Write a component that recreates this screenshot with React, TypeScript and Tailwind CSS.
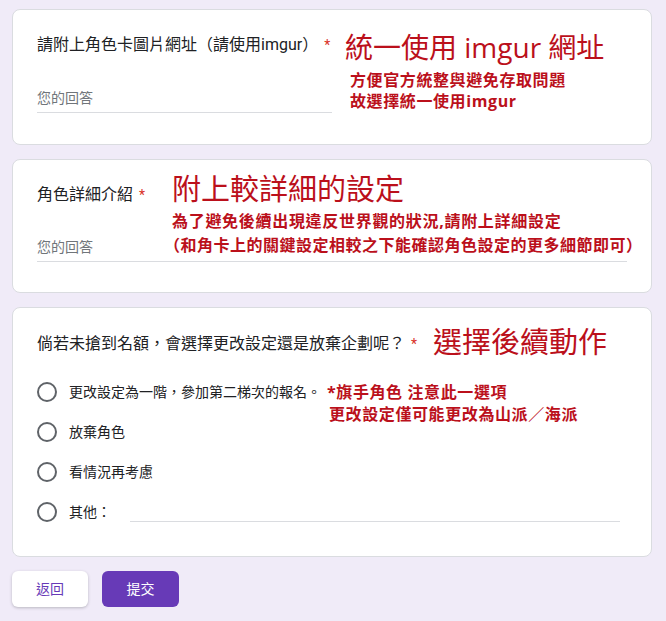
import React from 'react';

const formFont = { fontFamily: 'Roboto, "Noto Sans CJK TC", sans-serif' };
const noteFont = { fontFamily: '"Open Sans", "Noto Sans CJK TC", sans-serif' };

const Required = () => <span className="ml-[6px] text-[14px] text-[#d93025]">*</span>;

const Radio = () => (
  <span className="block h-5 w-5 shrink-0 rounded-full border-2 border-[#5f6368]" />
);

const Card: React.FC<{ className?: string; children: React.ReactNode }> = ({ className = '', children }) => (
  <div className={`w-[640px] rounded-lg border border-[#dadce0] bg-white pl-6 pr-6 ${className}`}>{children}</div>
);

export default function App() {
  return (
    <div className="min-h-screen bg-[#f0ebf8] pl-3 pt-[9px] pb-4 text-[#202124]" style={formFont}>
      <div className="flex flex-col gap-[14px]">
        {/* card 1 */}
        <Card className="flex items-start pt-[20px] pb-[31px]">
          <div className="mt-[3px] w-[295px] shrink-0">
            <div className="flex items-center text-[16px] leading-6">
              請附上角色卡圖片網址（請使用imgur）<Required />
            </div>
            <div className="mt-[29px] border-b border-[#dadce0] pb-[2px] text-[14px] leading-6 text-[#70757a]">您的回答</div>
          </div>
          <div className="ml-[13px] text-[#bb101b]" style={noteFont}>
            <div className="text-[28px] leading-[34px] whitespace-nowrap">統一使用 imgur 網址</div>
            <div className="ml-[5px] mt-[6px] text-[16px] font-bold leading-[21px] tracking-[0.6px]">
              <div>方便官方統整與避免存取問題</div>
              <div>故選擇統一使用imgur</div>
            </div>
          </div>
        </Card>

        {/* card 2 */}
        <Card className="pt-[12px] pb-[30px]">
          <div className="flex items-start">
            <div className="mt-[11px] w-[135px] shrink-0">
              <div className="flex items-center text-[16px] leading-6">
                角色詳細介紹<Required />
              </div>
              <div className="mt-[28px] text-[14px] leading-6 text-[#70757a]">您的回答</div>
            </div>
            <div className="text-[#bb101b]" style={noteFont}>
              <div className="text-[29px] leading-[34px]">附上較詳細的設定</div>
              <div className="text-[16px] font-bold leading-6 tracking-[0.7px] whitespace-nowrap">
                <div className="mt-[3px]">為了避免後續出現違反世界觀的狀況,請附上詳細設定</div>
                <div className="-ml-[8px] tracking-[0.5px]">（和角卡上的關鍵設定相較之下能確認角色設定的更多細節即可）</div>
              </div>
            </div>
          </div>
          <div className="mt-[2px] border-t border-[#dadce0]" />
        </Card>

        {/* card 3 */}
        <Card className="pt-[17px] pb-6">
          <div className="flex items-start">
            <div className="mt-[7px] flex items-center text-[16px] leading-6">
              倘若未搶到名額，會選擇更改設定還是放棄企劃呢？<Required />
            </div>
            <div className="ml-[16px] text-[29px] leading-[34px] text-[#bb101b]" style={noteFont}>
              選擇後續動作
            </div>
          </div>
          <div className="mt-[13px] flex flex-col text-[14px]">
            <div className="flex h-10 items-center">
              <Radio />
              <span className="ml-[12px]">更改設定為一階，參加第二梯次的報名。</span>
              <div className="ml-[6px] h-6 text-[16px] font-bold leading-6 tracking-[0.6px] text-[#bb101b] whitespace-nowrap" style={noteFont}>
                <div>*旗手角色 注意此一選項</div>
                <div className="ml-[2px] -mt-[2px]">更改設定僅可能更改為山派／海派</div>
              </div>
            </div>
            <div className="flex h-10 items-center">
              <Radio />
              <span className="ml-[12px]">放棄角色</span>
            </div>
            <div className="flex h-10 items-center">
              <Radio />
              <span className="ml-[12px]">看情況再考慮</span>
            </div>
            <div className="flex h-10 items-center">
              <Radio />
              <span className="ml-[12px] w-[61px]">其他：</span>
              <div className="h-5 w-[490px] border-b border-[#dadce0]" />
            </div>
          </div>
        </Card>
      </div>

      <div className="mt-[14px] flex gap-[14px]">
        <button className="h-9 w-[76px] rounded-md bg-white text-[14px] text-[#673ab7] shadow-[0_1px_3px_rgba(60,64,67,0.3)]">
          返回
        </button>
        <button className="h-9 w-[77px] rounded-md bg-[#673ab7] text-[14px] text-white">提交</button>
      </div>
    </div>
  );
}
